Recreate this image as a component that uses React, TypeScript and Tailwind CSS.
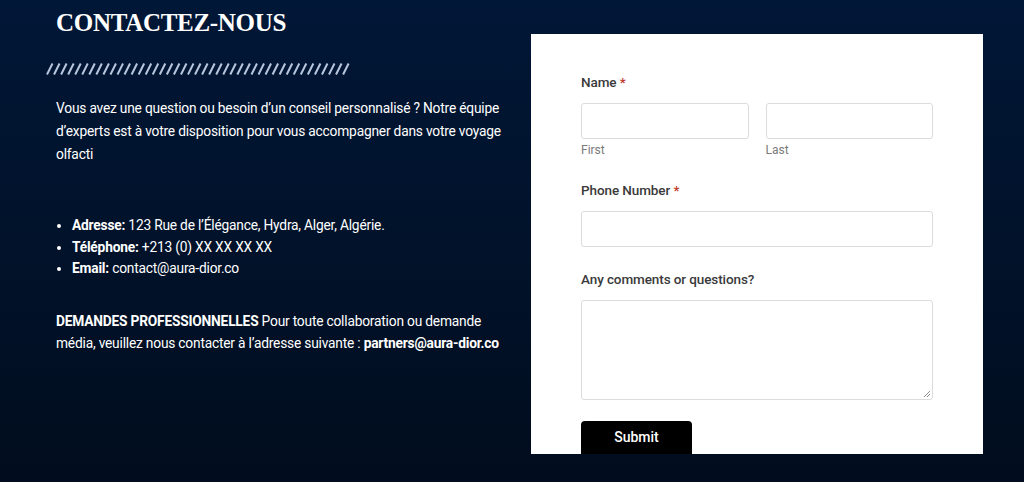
import React from 'react';

const stripes = Array.from({ length: 43 }, (_, i) => i);

const Stripes: React.FC = () => (
  <svg width="306" height="14" viewBox="0 0 306 14" className="block">
    {stripes.map((i) => (
      <line
        key={i}
        x1={1 + i * 7.05}
        y1={12.5}
        x2={6.5 + i * 7.05}
        y2={1.5}
        stroke="#b8c6dd"
        strokeWidth={2}
      />
    ))}
  </svg>
);

const Label: React.FC<{ text: string; required?: boolean }> = ({ text, required }) => (
  <div className="text-[13.5px] font-medium text-[#3a3a3a] leading-[20px] tracking-[-0.1px]">
    {text}
    {required && <span className="text-[#c0392b]"> *</span>}
  </div>
);

export default function App() {
  return (
    <div
      className="w-[1024px] h-[482px] overflow-hidden bg-gradient-to-b from-[#011737] to-[#010d1e] text-white"
      style={{ fontFamily: 'Roboto, "Liberation Sans", sans-serif' }}
    >
      <div className="flex pl-[56px]">
        {/* left column */}
        <div className="w-[475px] shrink-0">
          <h1
            className="mt-[8px] text-[25px] leading-[30px] font-bold tracking-[-0.3px]"
            style={{ fontFamily: '"Liberation Serif", "Times New Roman", serif' }}
          >
            CONTACTEZ-NOUS
          </h1>
          <div className="mt-[24px] -ml-[10px]">
            <Stripes />
          </div>
          <p className="mt-[21px] text-[13.75px] tracking-[-0.2px] leading-[23px] w-[455px]">
            Vous avez une question ou besoin d’un conseil personnalisé ? Notre équipe d’experts est à votre
            disposition pour vous accompagner dans votre voyage olfacti
          </p>
          <ul className="mt-[49px] list-disc pl-[16px] text-[13.75px] tracking-[-0.2px] leading-[21.5px]">
            <li>
              <strong className="font-bold">Adresse:</strong> 123 Rue de l’Élégance, Hydra, Alger, Algérie.
            </li>
            <li>
              <strong className="font-bold">Téléphone:</strong> +213 (0) XX XX XX XX
            </li>
            <li>
              <strong className="font-bold">Email:</strong> contact@aura-dior.co
            </li>
          </ul>
          <p className="mt-[30px] text-[13.75px] tracking-[-0.2px] leading-[22px] w-[455px]">
            <strong className="font-bold">DEMANDES PROFESSIONNELLES</strong> Pour toute collaboration ou demande
            média, veuillez nous contacter à l’adresse suivante :{' '}
            <strong className="font-bold">partners@aura-dior.co</strong>
          </p>
        </div>

        {/* form card */}
        <div className="mt-[34px] w-[452px] h-[420px] overflow-hidden bg-white px-[50px] pt-[38px]">
          <Label text="Name" required />
          <div className="mt-[11px] flex gap-[17px]">
            <div className="flex-1">
              <div className="h-[36px] rounded-[3px] border border-[#dcdcdc] bg-white" />
              <div className="mt-[3px] text-[12px] leading-[16px] text-[#7a7a7a]">First</div>
            </div>
            <div className="flex-1">
              <div className="h-[36px] rounded-[3px] border border-[#dcdcdc] bg-white" />
              <div className="mt-[3px] text-[12px] leading-[16px] text-[#7a7a7a]">Last</div>
            </div>
          </div>

          <div className="mt-[22px]">
            <Label text="Phone Number" required />
          </div>
          <div className="mt-[11px] h-[36px] rounded-[3px] border border-[#dcdcdc] bg-white" />

          <div className="mt-[22px]">
            <Label text="Any comments or questions?" />
          </div>
          <div className="relative mt-[11px] h-[100px] rounded-[3px] border border-[#dcdcdc] bg-white">
            <svg width="8" height="8" viewBox="0 0 8 8" className="absolute right-[1px] bottom-[1px]">
              <line x1="1" y1="7" x2="7" y2="1" stroke="#8a8a8a" strokeWidth="1" />
              <line x1="4" y1="7" x2="7" y2="4" stroke="#8a8a8a" strokeWidth="1" />
            </svg>
          </div>

          <button
            type="button"
            className="mt-[21px] h-[33px] w-[111px] rounded-t-[4px] bg-black text-[14px] font-medium text-white"
          >
            Submit
          </button>
        </div>
      </div>
    </div>
  );
}
